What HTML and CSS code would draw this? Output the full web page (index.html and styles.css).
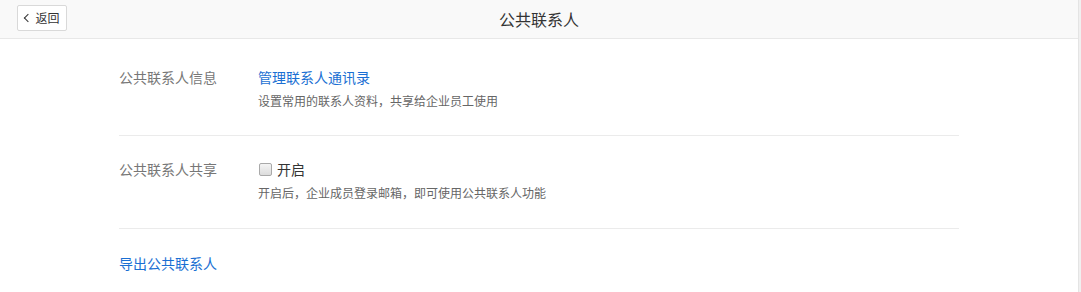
FILE: index.html
```html
<!DOCTYPE html>
<html>
<head>
    <meta charset="UTF-8">
    <title>公共联系人</title>
    <link rel="stylesheet" href="styles.css">
</head>
<body>
    <div class="page">
        <div class="top-bar">
            <button class="back-button"><span class="chevron"></span>返回</button>
            <h1 class="title">公共联系人</h1>
        </div>

        <div class="settings">
            <div class="setting-row">
                <div class="setting-label">公共联系人信息</div>
                <div class="setting-body">
                    <a class="link" href="#">管理联系人通讯录</a>
                    <p class="hint">设置常用的联系人资料，共享给企业员工使用</p>
                </div>
            </div>

            <div class="setting-row share">
                <div class="setting-label">公共联系人共享</div>
                <div class="setting-body">
                    <label class="check"><span class="check-box"></span>开启</label>
                    <p class="hint">开启后，企业成员登录邮箱，即可使用公共联系人功能</p>
                </div>
            </div>

            <div class="setting-row last">
                <a class="link" href="#">导出公共联系人</a>
            </div>
        </div>
    </div>
</body>
</html>
```

FILE: styles.css
```css
html, body {
    margin: 0;
    height: 100%;
}

body {
    font-family: "Noto Sans CJK SC", "Liberation Sans", sans-serif;
    background-color: #f0f0f0;
    color: #333;
}

.page {
    height: 100%;
    margin-right: 2px;
    background-color: #ffffff;
    border-right: 1px solid #e4e4e4;
    box-sizing: border-box;
}

.top-bar {
    height: 38px;
    background-color: #f9f9f9;
    border-bottom: 1px solid #e8e8e8;
    display: flex;
    align-items: center;
    justify-content: center;
    position: relative;
}

.back-button {
    position: absolute;
    left: 17px;
    top: 5px;
    width: 50px;
    height: 26px;
    background: #ffffff;
    border: 1px solid #d9d9d9;
    border-radius: 2px;
    font-family: inherit;
    font-size: 12px;
    color: #333;
    padding: 0 0 0 1px;
    display: flex;
    align-items: center;
    justify-content: center;
    gap: 3px;
    line-height: 1;
    cursor: pointer;
}

.chevron {
    width: 5px;
    height: 5px;
    border-left: 1.5px solid #333;
    border-bottom: 1.5px solid #333;
    transform: rotate(45deg);
    margin-right: 1px;
}

.title {
    margin: 0;
    font-size: 16px;
    font-weight: normal;
    color: #333;
    line-height: 20px;
}

.settings {
    width: 840px;
    margin-left: 119px;
    padding-top: 3px;
}

.setting-row {
    display: flex;
    padding: 25px 0 25px;
    border-bottom: 1px solid #ebebeb;
}

.setting-row.share {
    padding: 23px 0 26px;
}

.setting-row.last {
    padding-top: 24px;
    border-bottom: none;
}

.setting-label {
    width: 139px;
    flex-shrink: 0;
    font-size: 14px;
    line-height: 20px;
    color: #777;
}

.setting-body {
    flex: 1;
}

.link {
    display: block;
    font-size: 14px;
    line-height: 20px;
    color: #1a6fd3;
    text-decoration: none;
}

.hint {
    margin: 5px 0 0;
    font-size: 12px;
    line-height: 18px;
    color: #666;
}

.check {
    display: flex;
    align-items: center;
    font-size: 14px;
    line-height: 20px;
    color: #333;
}

.check-box {
    width: 11px;
    height: 11px;
    margin: 0 5px 0 1px;
    border: 1px solid #a9a9a9;
    border-radius: 2px;
    background: linear-gradient(#f4f4f4, #dcdcdc);
}
```
